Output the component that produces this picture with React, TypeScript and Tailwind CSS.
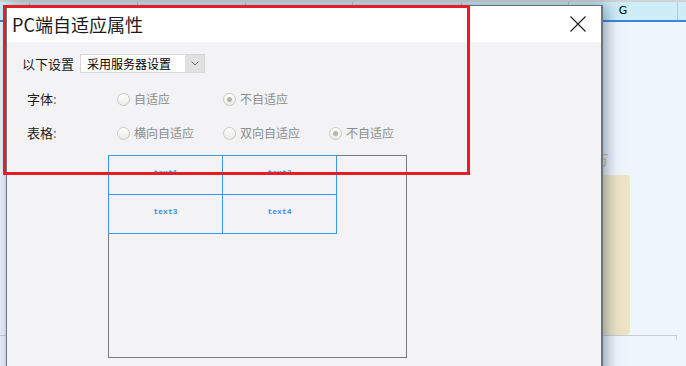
const cols = [
  { w: 30, label: '' },
  { w: 108, label: '' },
  { w: 108, label: '' },
  { w: 107, label: '' },
  { w: 109, label: '' },
  { w: 107, label: '' },
  { w: 109, label: 'G' },
];

const Radio = ({ checked }: { checked?: boolean }) => (
  <span className="flex items-center justify-center w-[13px] h-[13px] shrink-0 rounded-full border border-[#c9c9c1] bg-linear-to-b from-white to-[#e9e9e6]">
    {checked && <span className="w-[5px] h-[5px] rounded-full bg-[#b5b5ad]" />}
  </span>
);

const Option = ({ text, checked }: { text: string; checked?: boolean }) => (
  <label className="flex items-center gap-[4px] w-[106px] text-[12px] text-[#8c8c8c]">
    <Radio checked={checked} />
    <span>{text}</span>
  </label>
);

export default function App() {
  return (
    <div
      className="relative w-[686px] h-[366px] overflow-hidden bg-[#eef5fd]"
      style={{ fontFamily: '"Noto Sans CJK SC", "Noto Sans", sans-serif' }}
    >
      {/* spreadsheet behind the dialog */}
      <div className="flex flex-col">
        <div className="flex h-[20px] border-t-2 border-[#cfd3d6] bg-[#cdeef9]">
          {cols.map((c, i) => (
            <div
              key={i}
              className="flex items-center justify-center border-r border-[#b9c9cf] text-[11px] text-black"
              style={{ width: c.w, fontFamily: '"DejaVu Sans", sans-serif' }}
            >
              {c.label}
            </div>
          ))}
        </div>
        <div className="h-[2px] bg-[#3a86e0]" />
        <div className="flex items-end h-[313px] pl-[560px]">
          <div className="w-[70px] h-[160px] rounded-[4px] bg-[#ede4c4]" />
        </div>
        <div className="w-[677px] h-[5px] border-t border-r border-[#c4ceda]" />
      </div>
      <span className="absolute left-[592px] top-[146px] text-[17px] text-[#d6c59c]">方</span>

      {/* dialog */}
      <div className="absolute left-[6px] top-[5px] w-[597px] h-[380px] flex flex-col border-t border-l border-r-2 border-[#6e7479] bg-[#f3f3f5] shadow-[3px_0_14px_rgba(40,60,90,0.5)]">
        <div className="flex items-center justify-between h-[36px] pl-[5px] pr-[15px] bg-white">
          <h1 className="text-[18px] text-[#1a1a1a] font-normal">PC端自适应属性</h1>
          <svg width="16" height="16" viewBox="0 0 16 16">
            <path d="M0.5 0.5 L15.5 15.5 M15.5 0.5 L0.5 15.5" stroke="#1a1a1a" strokeWidth="1.1" fill="none" />
          </svg>
        </div>

        <div className="flex flex-col pt-[12px]">
          <div className="flex items-center h-[19px] pl-[15px] gap-[6px]">
            <span className="text-[13px] text-[#1a1a1a]">以下设置</span>
            <div className="flex h-[19px] w-[125px] border border-[#d6d6d6] bg-white">
              <span className="flex-1 flex items-center pl-[6px] text-[12px] text-black">采用服务器设置</span>
              <span className="flex items-center justify-center w-[19px] bg-[#e1e1e1]">
                <svg width="8" height="5" viewBox="0 0 8 5">
                  <path d="M0.5 0.5 L4 4 L7.5 0.5" fill="none" stroke="#666" strokeWidth="1" />
                </svg>
              </span>
            </div>
          </div>

          <div className="flex items-center h-[20px] mt-[16px] pl-[20px]">
            <span className="w-[90px] text-[13px] text-[#1a1a1a]">
              字体<span className="text-[#6a6a78]">:</span>
            </span>
            <Option text="自适应" />
            <Option text="不自适应" checked />
          </div>

          <div className="flex items-center h-[20px] mt-[14px] pl-[20px]">
            <span className="w-[90px] text-[13px] text-[#1a1a1a]">
              表格<span className="text-[#6a6a78]">:</span>
            </span>
            <Option text="横向自适应" />
            <Option text="双向自适应" />
            <Option text="不自适应" checked />
          </div>

          <div className="ml-[101px] mt-[12px] w-[299px] h-[203px] border border-[#7a7a7a]">
            <div
              className="-mt-px -ml-px grid grid-cols-[114px_114px] w-[229px] border-l border-t border-[#3d96ef] text-[8px] font-bold text-[#3d8ee6]"
              style={{ fontFamily: '"Liberation Mono", monospace' }}
            >
              {['text1', 'text2', 'text3', 'text4'].map((t) => (
                <div
                  key={t}
                  className="flex items-center justify-center h-[39px] pb-[4px] border-r border-b border-[#3d96ef]"
                >
                  {t}
                </div>
              ))}
            </div>
          </div>
        </div>
      </div>

      {/* annotation */}
      <div className="absolute left-[3px] top-[5px] w-[467px] h-[170px] border-[3px] border-[#e81c24] pointer-events-none" />
    </div>
  );
}
